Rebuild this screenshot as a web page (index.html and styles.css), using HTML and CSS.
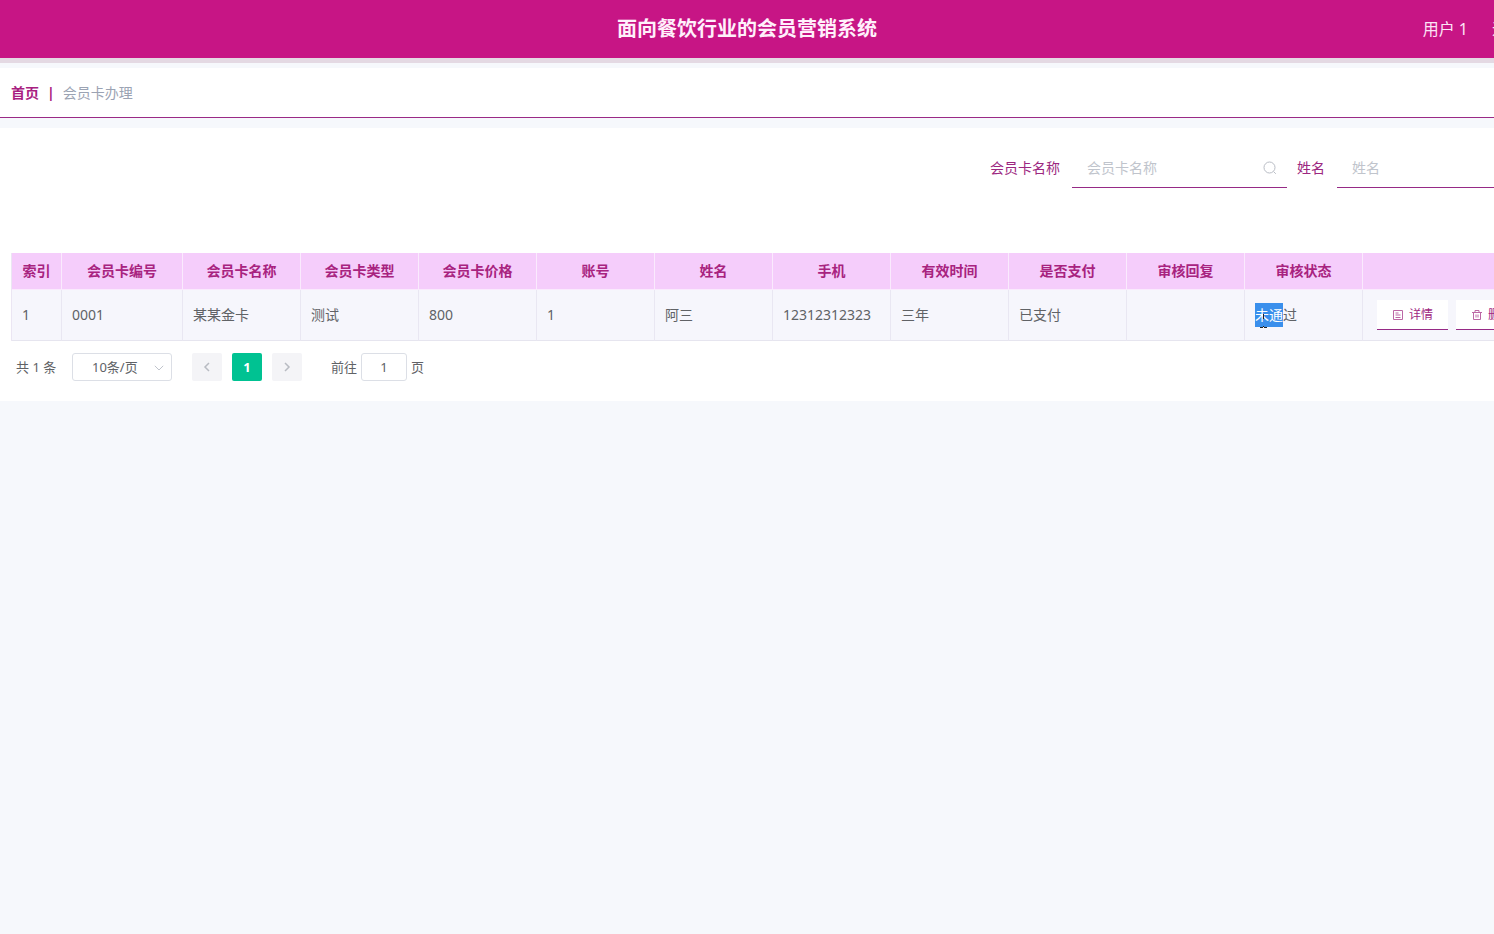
FILE: index.html
```html
<!DOCTYPE html>
<html lang="zh-CN">
<head>
<meta charset="utf-8">
<title>面向餐饮行业的会员营销系统</title>
<link rel="stylesheet" href="styles.css">
</head>
<body>
<header class="topbar">
  <h1 class="topbar-title">面向餐饮行业的会员营销系统</h1>
  <nav class="topbar-nav"><span>用户 1</span><a href="#">退出</a></nav>
</header>
<nav class="crumbs" aria-label="面包屑">
  <a class="crumb-home" href="#">首页</a><span class="crumb-sep">|</span><span class="crumb-current">会员卡办理</span>
</nav>
<main class="panel">
  <form class="search">
    <label class="search-label" for="card-name">会员卡名称</label>
    <span class="search-box">
      <input class="search-input" id="card-name" type="text" placeholder="会员卡名称">
      <svg class="search-icon" viewBox="0 0 14 14" aria-hidden="true"><circle cx="6.5" cy="6.5" r="5.5"/><path d="M10.6 10.6 12.8 12.8"/></svg>
    </span>
    <label class="search-label search-label-next" for="person-name">姓名</label>
    <span class="search-box">
      <input class="search-input" id="person-name" type="text" placeholder="姓名">
    </span>
  </form>
  <table class="grid">
    <colgroup><col class="col-index"><col class="col-number"><col span="10" class="col-data"><col></colgroup>
    <thead>
      <tr><th>索引</th><th>会员卡编号</th><th>会员卡名称</th><th>会员卡类型</th><th>会员卡价格</th><th>账号</th><th>姓名</th><th>手机</th><th>有效时间</th><th>是否支付</th><th>审核回复</th><th>审核状态</th><th></th></tr>
    </thead>
    <tbody>
      <tr>
        <td>1</td><td>0001</td><td>某某金卡</td><td>测试</td><td>800</td><td>1</td><td>阿三</td><td>12312312323</td><td>三年</td><td>已支付</td><td></td>
        <td><span class="status"><span class="selected">未通</span>过<svg class="ibeam" viewBox="0 0 7 18" aria-hidden="true"><path d="M3.5 4v5M0 17.5h3M4 17.5h3M3 16.5h1"/></svg></span></td>
        <td class="cell-actions"><div class="actions">
          <button class="action" type="button"><svg class="action-icon" viewBox="0 0 12 12" aria-hidden="true"><path d="M1.5 1.5h9v9h-9zM3.5 4h3M3.5 6h5M3.5 8.5h5"/></svg>详情</button>
          <button class="action" type="button"><svg class="action-icon" viewBox="0 0 12 12" aria-hidden="true"><path d="M1 3.5h10M4 3.5v-2h4v2M2.5 3.5v7h7v-7M5 5.5v3M7 5.5v3"/></svg>删除</button>
        </div></td>
      </tr>
    </tbody>
  </table>
  <div class="pager">
    <span class="pager-total">共 1 条</span>
    <span class="size-box">
      <select class="size-select" aria-label="每页条数"><option>10条/页</option></select>
      <svg class="size-arrow" viewBox="0 0 10 6" aria-hidden="true"><path d="M.8.8 5 5 9.2.8"/></svg>
    </span>
    <div class="pages">
      <button class="page-btn" type="button" aria-label="上一页"><svg class="page-arrow" viewBox="0 0 8 10" aria-hidden="true"><path d="M6 1 2 5l4 4"/></svg></button>
      <button class="page-btn page-active" type="button">1</button>
      <button class="page-btn" type="button" aria-label="下一页"><svg class="page-arrow" viewBox="0 0 8 10" aria-hidden="true"><path d="M2 1l4 4-4 4"/></svg></button>
    </div>
    <label class="jump">前往<input class="jump-input" type="text" value="1">页</label>
  </div>
</main>
</body>
</html>
```

FILE: styles.css
```css
* { box-sizing: border-box; }

body {
  margin: 0;
  min-height: 100vh;
  overflow: hidden;
  background: #f6f8fc;
  color: #606266;
  font: 14px/24px "Noto Sans", "Noto Sans CJK SC", sans-serif;
}

input, select, button { font: inherit; color: inherit; }
a { color: inherit; text-decoration: none; }
svg { fill: none; stroke: currentColor; }

.topbar {
  display: grid;
  grid-template-columns: 1fr auto 1fr;
  align-items: center;
  height: 58px;
  background: #c71585;
  color: #fce4f6;
  box-shadow: 0 5px 0 #e4d9e3;
}
.topbar-title {
  grid-column: 2;
  margin: 0;
  color: #fff0fb;
  font-size: 20px;
  font-weight: 700;
  line-height: 58px;
}
.topbar-nav {
  display: flex;
  justify-content: flex-end;
  gap: 24px;
  margin-right: -30px;
  font-size: 16px;
  white-space: nowrap;
}

.crumbs {
  display: flex;
  align-items: center;
  height: 50px;
  margin-top: 10px;
  padding: 0 11px;
  border-bottom: 1px solid #9a2a86;
  background: #fff;
}
.crumb-home, .crumb-sep { color: #a82080; font-weight: 700; }
.crumb-sep { margin: 0 8px; }
.crumb-current { color: #9ba3b3; }

.panel {
  margin: 10px -58px 0 0;
  padding: 20px 0 20px 11px;
  background: #fff;
}

.search {
  display: flex;
  justify-content: flex-end;
  line-height: 40px;
}
.search-label { padding-right: 12px; color: #9c2780; }
.search-label-next { margin-left: 10px; }
.search-box { position: relative; width: 215px; }
.search-input {
  display: block;
  width: 100%;
  height: 40px;
  padding: 0 15px;
  border: 0;
  border-bottom: 1px solid #962a86;
  background: transparent;
  outline: 0;
}
.search-input::placeholder { color: #c0c4cc; opacity: 1; }
.search-icon {
  position: absolute;
  top: 13px;
  right: 10px;
  width: 14px;
  height: 14px;
  color: #b9bdc5;
}

.grid {
  width: 100%;
  margin-top: 65px;
  table-layout: fixed;
  border-spacing: 0;
  border-left: 1px solid #ebe6f3;
}
.col-index { width: 50px; }
.col-number { width: 121px; }
.col-data { width: 118px; }
.grid th, .grid td {
  padding: 0 10px;
  border-right: 1px solid #e9e7f2;
  border-bottom: 1px solid #e6e5ef;
  text-align: left;
  white-space: nowrap;
}
.grid th {
  height: 37px;
  padding: 0;
  border-color: #faeafd;
  background: #f5cdfb;
  color: #a8237f;
  font-weight: 700;
  text-align: center;
}
.grid td { height: 51px; background: #f6f6fc; }
.grid .cell-actions { padding: 0 14px; }

.status { position: relative; display: inline-block; }
.selected { display: inline-block; background: #3a8fec; color: #fff; }
.ibeam {
  position: absolute;
  top: 7px;
  left: 5px;
  width: 7px;
  height: 18px;
  color: #222;
}

.actions { display: flex; gap: 8px; }
.action {
  display: flex;
  align-items: center;
  justify-content: center;
  gap: 5px;
  width: 71px;
  height: 30px;
  padding: 0;
  border: 0;
  border-bottom: 1px solid #962a86;
  background: #fff;
  color: #a0277f;
  font-size: 12px;
}
.action-icon { width: 12px; height: 12px; opacity: 0.7; }

.pager {
  display: flex;
  align-items: center;
  height: 28px;
  margin-top: 12px;
  padding-left: 5px;
  font-size: 13px;
}
.pager-total { width: 56px; }
.size-box { position: relative; width: 100px; }
.size-select {
  display: block;
  width: 100%;
  height: 28px;
  padding: 0 19px;
  border: 1px solid #dcdfe6;
  border-radius: 3px;
  background: #fff;
  appearance: none;
}
.size-arrow {
  position: absolute;
  top: 12px;
  right: 8px;
  width: 10px;
  height: 6px;
  color: #c0c4cc;
}
.pages { display: flex; gap: 10px; margin: 0 29px 0 20px; }
.page-btn {
  display: flex;
  align-items: center;
  justify-content: center;
  width: 30px;
  height: 28px;
  padding: 0;
  border: 0;
  border-radius: 2px;
  background: #f4f4f7;
  color: #b8bbc2;
  font-weight: 700;
}
.page-active { background: #00c292; color: #fff; }
.page-arrow { width: 8px; height: 10px; stroke-width: 1.5; }
.jump { display: flex; align-items: center; gap: 4px; }
.jump-input {
  width: 46px;
  height: 28px;
  padding: 0;
  border: 1px solid #dcdfe6;
  border-radius: 3px;
  background: #fff;
  text-align: center;
}
```
